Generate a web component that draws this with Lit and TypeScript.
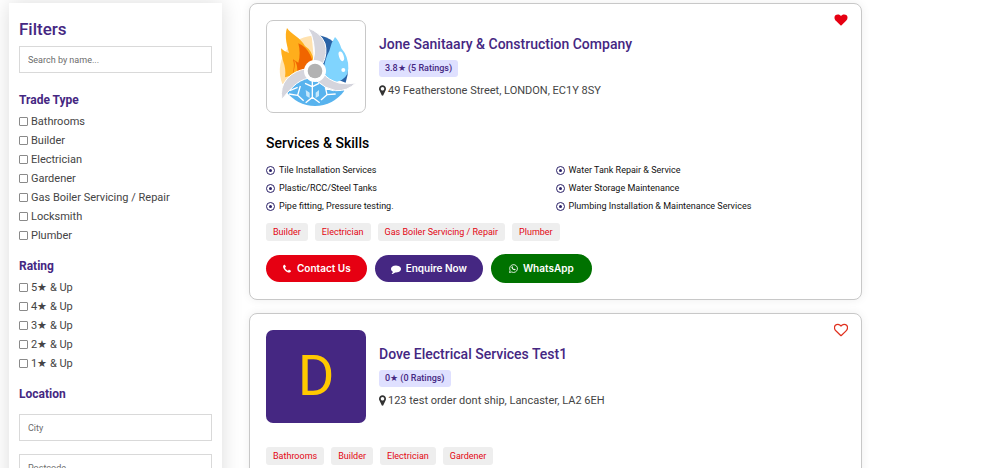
import { LitElement, html, css, svg, nothing } from "lit";
import { customElement, property } from "lit/decorators.js";

const HEART =
  "M896 1664q-26 0-44-18l-624-602q-10-8-27.500-26t-55.500-65.500-68-97.500-53.500-121-23.500-138q0-220 127-344t351-124q62 0 126.500 21.500t120 58 95.500 68.500 76 68q36-36 76-68t95.500-68.500 120-58 126.500-21.500q224 0 351 124t127 344q0 221-229 450l-623 600q-18 18-44 18z";
const PHONE =
  "M1600 1240q0 27-10 70.500t-21 68.500q-21 50-122 106-94 51-186 51-27 0-53-3.500t-57.500-12.500-47-14.500-55.500-20.500-49-18q-98-35-175-83-127-79-264-216t-216-264q-48-77-83-175-3-9-18-49t-20.500-55.500-14.500-47-12.500-57.500-3.500-53q0-92 51-186 56-101 106-122 25-11 68.500-21t70.500-10q14 0 21 3 18 6 53 76 11 19 30 54t35 63.500 31 53.500q3 4 17.500 25t21.500 35.500 7 28.500q0 20-28.500 50t-62 55-62 53-28.500 46q0 9 5 22.500t8.500 20.500 14 24 11.500 19q76 137 174 235t235 174q2 1 19 11.500t24 14 20.500 8.500 22.500 5q18 0 46-28.500t53-62 55-62 50-28.500q14 0 28.500 7t35.500 21.500 25 17.500q25 15 53.500 31t63.500 35 54 30q70 35 76 53 3 7 3 21z";
const COMMENT =
  "M1792 896q0 174-120 321.500t-326 233-450 85.500q-70 0-145-8-198 175-460 242-49 14-114 22-17 2-30.500-9t-17.500-29v-1q-3-4-.5-12t2-10 4.500-9.500l6-9 7-8.500 8-9q7-8 31-34.500t34.500-38 31-39.500 32.500-51 27-59 26-76q-157-89-247.500-220t-90.500-281q0-130 71-248.500t191-204.500 286-136.500 348-50.500q244 0 450 85.500t326 233 120 321.500z";
const PIN =
  "M1152 640q0-106-75-181t-181-75-181 75-75 181 75 181 181 75 181-75 75-181zm256 0q0 109-33 179l-364 774q-16 33-47.500 52t-67.500 19-67.500-19-46.500-52l-365-774q-33-70-33-179 0-212 150-362t362-150 362 150 150 362z";

interface Trader {
  name: string;
  rating: string;
  address: string;
  initial?: string;
  saved: boolean;
  services: string[];
  trades: string[];
}

const TRADES = ["Bathrooms", "Builder", "Electrician", "Gardener", "Gas Boiler Servicing / Repair", "Locksmith", "Plumber"];
const RATINGS = ["5★ & Up", "4★ & Up", "3★ & Up", "2★ & Up", "1★ & Up"];

const TRADERS: Trader[] = [
  {
    name: "Jone Sanitaary & Construction Company",
    rating: "3.8★ (5 Ratings)",
    address: "49 Featherstone Street, LONDON, EC1Y 8SY",
    saved: true,
    services: [
      "Tile Installation Services",
      "Water Tank Repair & Service",
      "Plastic/RCC/Steel Tanks",
      "Water Storage Maintenance",
      "Pipe fitting, Pressure testing.",
      "Plumbing Installation & Maintenance Services",
    ],
    trades: ["Builder", "Electrician", "Gas Boiler Servicing / Repair", "Plumber"],
  },
  {
    name: "Dove Electrical Services Test1",
    rating: "0★ (0 Ratings)",
    address: "123 test order dont ship, Lancaster, LA2 6EH",
    initial: "D",
    saved: false,
    services: [],
    trades: ["Bathrooms", "Builder", "Electrician", "Gardener"],
  },
];

@customElement("filter-panel")
class FilterPanel extends LitElement {
  static styles = css`
    :host {
      display: block;
      box-sizing: border-box;
      padding: 16px 10px 24px;
      background: #fff;
      box-shadow: 0 0 20px rgba(0, 0, 0, 0.14);
    }
    h2 {
      margin: 0 0 6px;
      font: 500 17px/21px Roboto, sans-serif;
      color: #452782;
    }
    fieldset {
      margin: 0;
      padding: 0;
      border: 0;
    }
    legend {
      padding: 0;
      margin: 0 0 3px;
      font-size: 12px;
      font-weight: 700;
      line-height: 18px;
      color: #452782;
    }
    .group {
      margin-top: 18px;
    }
    .group.next {
      margin-top: 12px;
    }
    .option {
      display: flex;
      align-items: center;
      gap: 3px;
      font-size: 11px;
      line-height: 19px;
      color: #444;
    }
    .tick {
      appearance: none;
      box-sizing: border-box;
      flex: none;
      width: 9px;
      height: 9px;
      margin: 0;
      border: 1px solid #8a8a8a;
      border-radius: 1px;
      background: #fff;
    }
    .tick:checked {
      background: #452782;
    }
    .field {
      display: block;
      box-sizing: border-box;
      width: 100%;
      height: 27px;
      padding: 0 8px;
      border: 1px solid #d9d9d9;
      border-radius: 0;
      font: 9px/14px Roboto, sans-serif;
      color: #444;
    }
    .field::placeholder {
      color: #6c6c6c;
      opacity: 1;
    }
    .places {
      display: grid;
      gap: 13px;
      padding-top: 8px;
    }
  `;

  private options(items: string[]) {
    return items.map(
      (item) => html`<label class="option"><input class="tick" type="checkbox" />${item}</label>`
    );
  }

  render() {
    return html`
      <h2>Filters</h2>
      <input class="field" type="text" placeholder="Search by name..." aria-label="Search by name" />
      <fieldset class="group"><legend>Trade Type</legend>${this.options(TRADES)}</fieldset>
      <fieldset class="group next"><legend>Rating</legend>${this.options(RATINGS)}</fieldset>
      <fieldset class="group next">
        <legend>Location</legend>
        <div class="places">
          <input class="field" type="text" placeholder="City" aria-label="City" />
          <input class="field" type="text" placeholder="Postcode" aria-label="Postcode" />
        </div>
      </fieldset>
    `;
  }
}

@customElement("trader-card")
class TraderCard extends LitElement {
  @property({ attribute: false }) trader!: Trader;

  static styles = css`
    :host {
      display: block;
      box-sizing: border-box;
      position: relative;
      padding: 16px;
      border: 1px solid #c8c8c8;
      border-radius: 8px;
      background: #fff;
      box-shadow: 0 0 10px rgba(0, 0, 0, 0.07);
    }
    button {
      border: 0;
      cursor: pointer;
    }
    .save {
      position: absolute;
      top: 9px;
      right: 13px;
      padding: 0;
      background: none;
      line-height: 0;
    }
    .head {
      display: flex;
      align-items: center;
      gap: 13px;
    }
    .logo {
      flex: none;
      display: grid;
      place-items: center;
      box-sizing: border-box;
      width: 100px;
      height: 93px;
      border: 1px solid #c8c8c8;
      border-radius: 7px;
      overflow: hidden;
    }
    .logo.letter {
      border: 0;
      background: #452782;
      color: #ffc800;
      font-size: 56px;
      line-height: 93px;
    }
    h3 {
      margin: 0;
      font-size: 14px;
      font-weight: 500;
      line-height: 20px;
      color: #452782;
    }
    .rating {
      display: inline-block;
      margin: 6px 0 5px;
      padding: 0 6px;
      border-radius: 3px;
      background: #dfe0ff;
      font-size: 9px;
      font-weight: 500;
      line-height: 17px;
      color: #452782;
    }
    .address {
      display: flex;
      align-items: center;
      gap: 2px;
      margin: 0;
      font-size: 11px;
      line-height: 18px;
      color: #444;
    }
    h4 {
      margin: 20px 0 8px;
      font-size: 14px;
      font-weight: 500;
      line-height: 20px;
      color: #000;
    }
    .services {
      display: grid;
      grid-template-columns: 1fr 1fr;
      margin: 0;
      padding: 0;
      list-style: none;
      font-size: 9px;
      line-height: 18px;
      color: #111;
    }
    .service {
      display: flex;
      align-items: center;
      gap: 4px;
    }
    .tags {
      display: flex;
      flex-wrap: wrap;
      gap: 7px;
      margin-top: 8px;
    }
    .tags.alone {
      margin-top: 24px;
    }
    .tag {
      padding: 0 7px;
      border-radius: 3px;
      background: #eee;
      font-size: 9px;
      line-height: 18px;
      color: #e30613;
    }
    .actions {
      display: flex;
      flex-wrap: wrap;
      align-items: center;
      gap: 8px;
      margin-top: 13px;
    }
    .action {
      display: flex;
      align-items: center;
      gap: 5px;
      padding: 0 16px;
      border-radius: 15px;
      font: 600 10px/27px Inter, sans-serif;
      color: #fff;
    }
    .call {
      background: #e60012;
    }
    .enquire {
      background: #452782;
    }
    .chat {
      padding: 0 18px;
      background: #007200;
      line-height: 29px;
    }
  `;

  private icon(path: string, size: number) {
    return html`<svg width=${size} height=${size} viewBox="0 0 1792 1792" fill="currentColor" aria-hidden="true"><path d=${path} /></svg>`;
  }

  private heart(saved: boolean) {
    return html`<svg width="14" height="14" viewBox="-64 0 1920 1792" aria-hidden="true">
      <path d=${HEART} fill=${saved ? "#e60012" : "none"} stroke=${saved ? "none" : "#e0301e"} stroke-width="170" />
    </svg>`;
  }

  private emblem() {
    return svg`<svg width="98" height="92" viewBox="66 61 294 276" aria-hidden="true">
      <path d="M210 210L112 250A106 106 0 0 1 200 105z" fill="#ffe2b0" />
      <path d="M210 210L222 104A107 107 0 0 1 302 246z" fill="#2962a6" />
      <path d="M210 210L122 270A107 107 0 0 0 298 270z" fill="#58b3ee" />
      <path d="M126 82C138 100 168 112 180 136Q202 150 206 180L184 212L120 230Q124 205 114 180Q108 160 108 143Q118 154 132 157Q128 145 124 124Q120 98 126 82z" fill="#ffae1c" />
      <path d="M160 128Q184 138 196 164L204 184L182 206L143 218Q150 196 144 176L160 186Q168 160 160 128z" fill="#f06500" />
      <path d="M148 178Q158 190 157 214L143 220Q152 200 148 178z" fill="#ffae1c" />
      <path d="M270 109Q282 120 289 143Q311 168 310 204Q308 236 274 244Q240 240 236 205Q240 174 253 150Q258 126 270 109z" fill="#80d4fe" />
      <ellipse cx="289" cy="167" rx="7" ry="15" transform="rotate(-18 289 167)" fill="#fff" />
      <circle cx="295" cy="208" r="6" fill="#fff" />
      <g fill="none" stroke="#fff" stroke-width="4">
        <path d="M166 256l-8 28 18 16M158 284l-26-4M134 270l24-10M202 238v20l-22-10M202 258l20-10M202 258v32l-20 16M202 290l22 16M240 254l6 28-18 16M246 282l26-2M240 262l26 8" />
      </g>
      <path d="M182 268l12 8v16l-10-6zM222 268l-10 8v16l10-6z" fill="#c5e8fc" />
      <g fill="#d5d5dd" stroke="#fff" stroke-width="3">
        <path d="M188 82Q226 94 240 128Q248 158 234 188L204 182Q212 158 206 128Q202 100 188 82z" />
        <path d="M111 296Q104 260 126 234Q150 208 188 204L192 232Q164 238 144 258Q126 276 111 296z" />
        <path d="M234 218Q250 238 282 247Q306 252 332 247Q308 272 272 270Q240 264 214 240z" />
      </g>
      <circle cx="210" cy="211" r="33" fill="#fff" />
      <circle cx="210" cy="211" r="22" fill="#b2b2b2" />
    </svg>`;
  }

  render() {
    const t = this.trader;
    return html`
      <button class="save" aria-label=${t.saved ? "Remove from saved" : "Save"}>${this.heart(t.saved)}</button>
      <div class="head">
        ${t.initial
          ? html`<div class="logo letter">${t.initial}</div>`
          : html`<div class="logo">${this.emblem()}</div>`}
        <div>
          <h3>${t.name}</h3>
          <span class="rating">${t.rating}</span>
          <p class="address">
            <svg width="7" height="11" viewBox="384 128 1024 1536" fill="#333" aria-hidden="true"><path d=${PIN} /></svg>${t.address}
          </p>
        </div>
      </div>
      ${t.services.length
        ? html`<h4>Services &amp; Skills</h4>
            <ul class="services">
              ${t.services.map(
                (s) => html`<li class="service">
                  <svg width="9" height="9" viewBox="0 0 18 18" aria-hidden="true">
                    <circle cx="9" cy="9" r="8" fill="none" stroke="#2b2168" stroke-width="2" />
                    <circle cx="9" cy="9" r="3" fill="#2b2168" />
                  </svg>${s}
                </li>`
              )}
            </ul>`
        : nothing}
      <div class="tags ${t.services.length ? "" : "alone"}">
        ${t.trades.map((x) => html`<span class="tag">${x}</span>`)}
      </div>
      <div class="actions">
        <button class="action call">${this.icon(PHONE, 10)}Contact Us</button>
        <button class="action enquire">${this.icon(COMMENT, 10)}Enquire Now</button>
        <button class="action chat">
          <svg width="9" height="9" viewBox="0 0 18 18" aria-hidden="true">
            <path d="M1 17l1.200-4.300A7.800 7.800 0 1 1 5.300 15.900z" fill="none" stroke="#fff" stroke-width="1.700" />
            <path d="M6 4.600q.9-.5 1.300.4l.6 1.400q.1.500-.7 1.300 1 1.900 3 2.700.8-1.200 1.300-1l1.700.9q.4 2.200-2.200 2.300Q6.500 12 4.900 7.500 4.600 5.700 6 4.600z" fill="#fff" />
          </svg>WhatsApp
        </button>
      </div>
    `;
  }
}

@customElement("app-root")
class AppRoot extends LitElement {
  static styles = css`
    :host {
      display: grid;
      grid-template-columns: 213fr 613fr 107fr;
      align-items: start;
      gap: 27px;
      padding: 3px 0 24px 9px;
      background: #fff;
      font-family: Roboto, sans-serif;
    }
    .results {
      display: grid;
      gap: 13px;
    }
  `;

  render() {
    return html`
      <filter-panel></filter-panel>
      <main class="results">${TRADERS.map((t) => html`<trader-card .trader=${t}></trader-card>`)}</main>
    `;
  }
}
